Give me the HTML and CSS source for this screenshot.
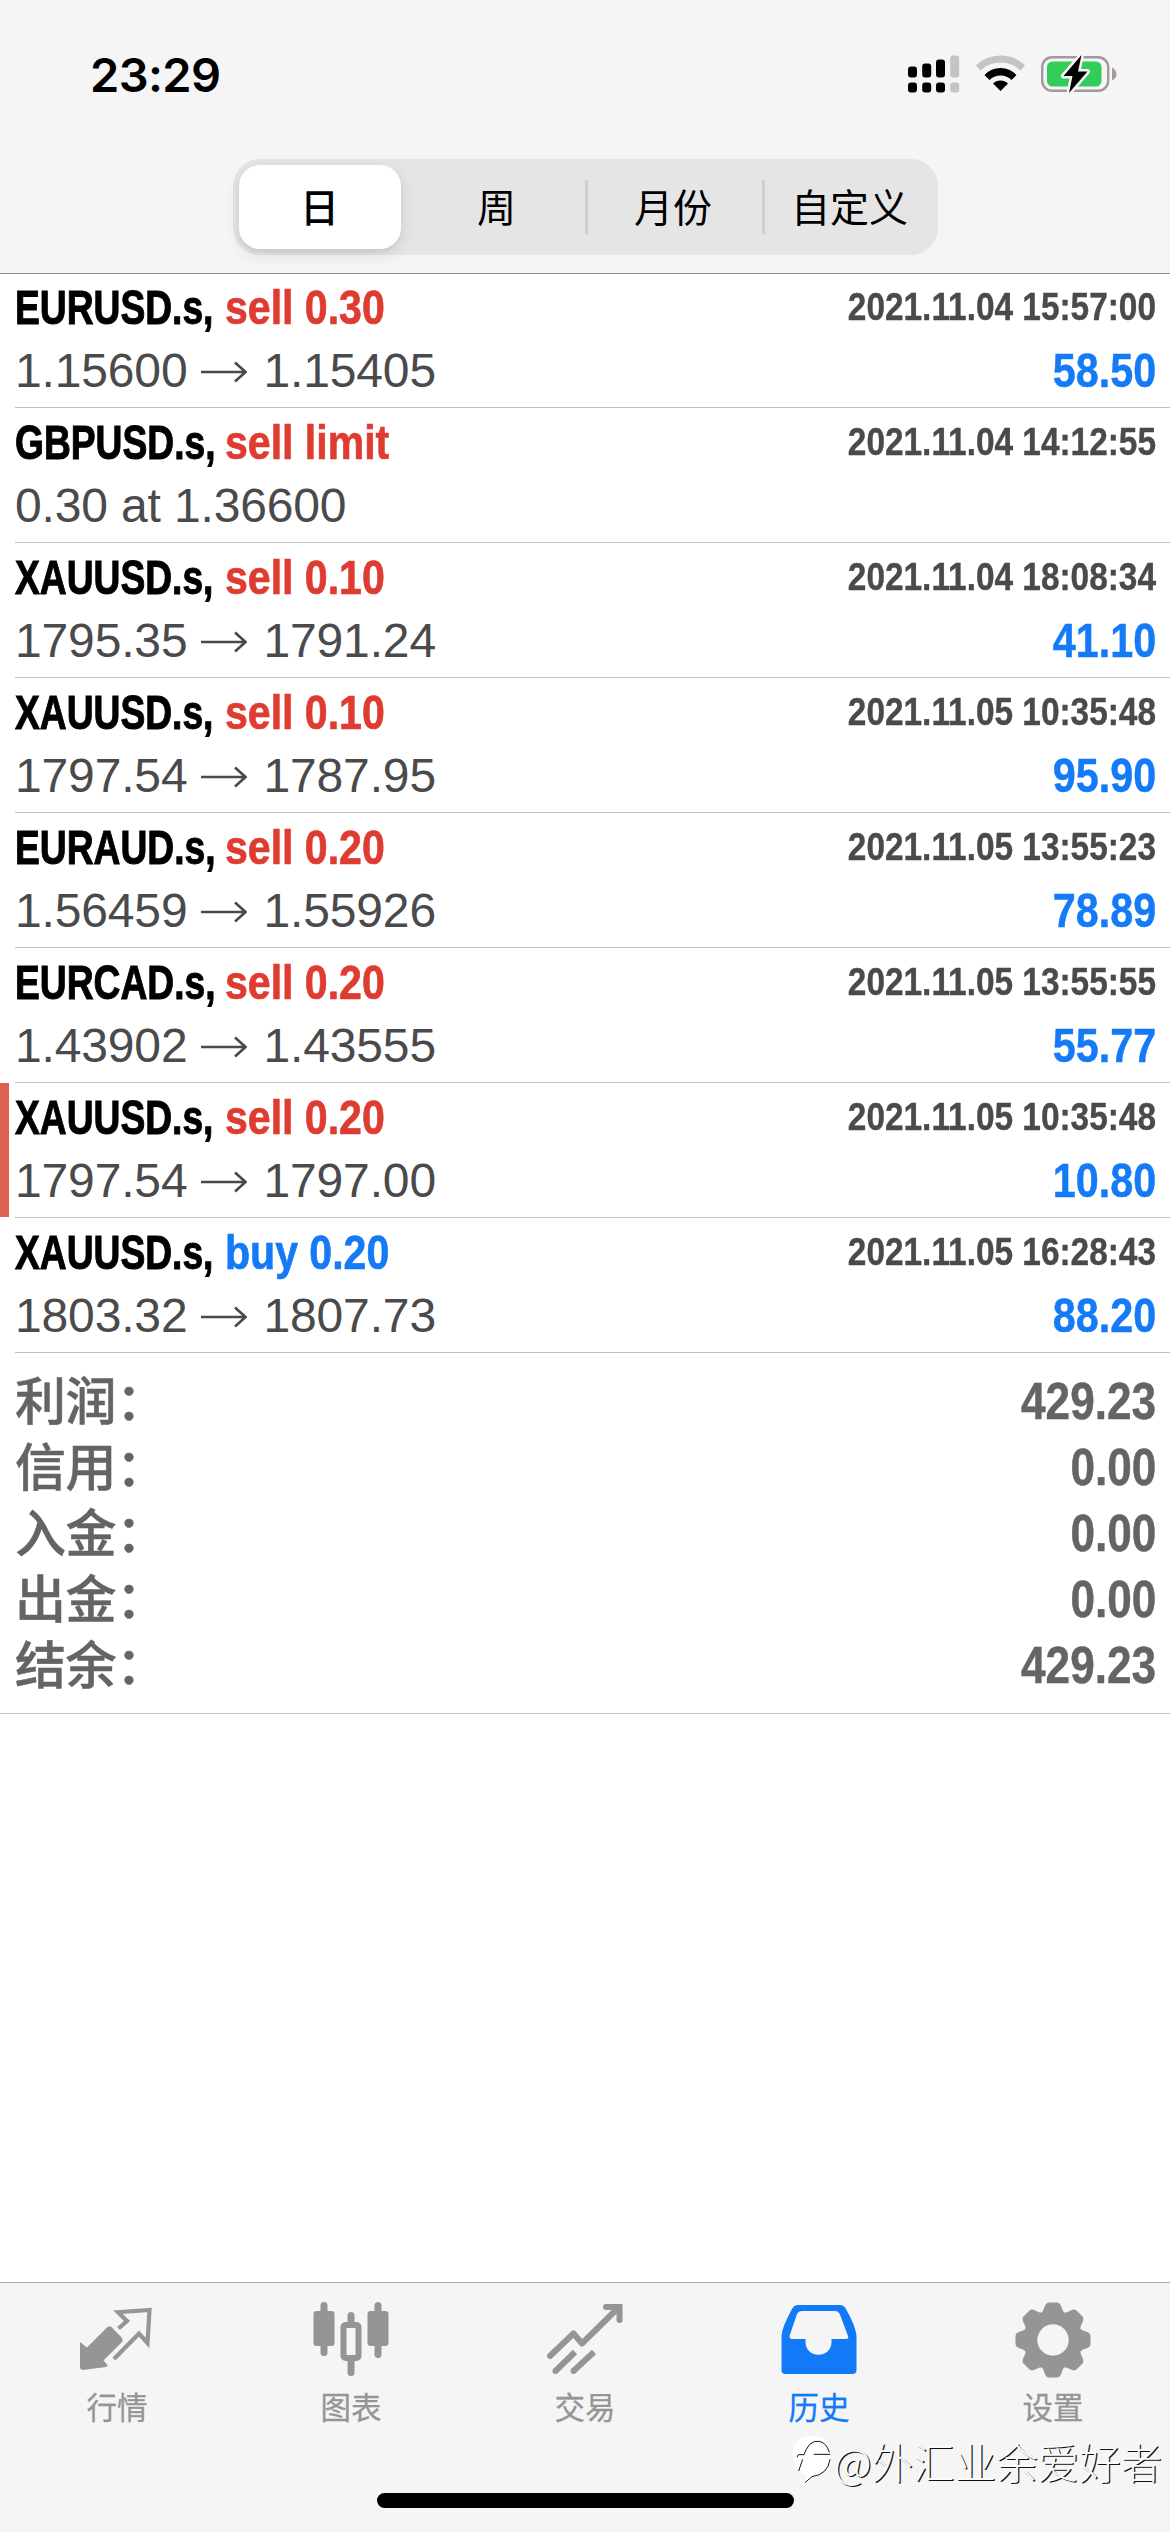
FILE: index.html
```
<!DOCTYPE html>
<html lang="zh-CN">
<head>
<meta charset="utf-8">
<title>历史</title>
<link rel="stylesheet" href="styles.css">
</head>
<body>
<svg class="defs" width="0" height="0" aria-hidden="true">
  <symbol id="arrow" viewBox="0 0 46 22"><path d="M0 11H44M34 1.500L44.500 11L34 20.500" fill="none" stroke="currentColor" stroke-width="2.600"/></symbol>
</svg>
<header class="header">
  <div class="status">
    <span class="clock">23:29</span>
    <svg class="signal" width="52" height="38" viewBox="0 0 52 38">
      <rect x="0" y="11.500" width="9" height="11" rx="3"/><rect x="14.200" y="8.500" width="9" height="14" rx="3"/><rect x="28" y="4.500" width="9" height="18" rx="3"/><rect class="faint" x="42.200" y="0.500" width="9" height="22" rx="3"/>
      <rect x="0" y="27.500" width="9" height="10" rx="3"/><rect x="14.200" y="27.500" width="9" height="10" rx="3"/><rect x="28" y="27.500" width="9" height="10" rx="3"/><rect class="faint" x="42.200" y="27.500" width="9" height="10" rx="3"/>
    </svg>
    <svg class="wifi" width="49" height="38" viewBox="0 0 49 38">
      <path class="faint" d="M0 10.500Q10 0.500 24.500 0.500T49 10.500L44.500 15.500Q36 7.500 24.500 7.500T4.500 15.500Z"/>
      <path d="M8.500 20Q15 13 24.500 13T40.500 20L35.500 25Q31 20.500 24.500 20.500T13.500 25Z"/>
      <path d="M17 28.500Q20 25.500 24.500 25.500T32 28.500L24.500 36Z"/>
    </svg>
    <svg class="battery" width="76" height="40" viewBox="0 0 76 40">
      <rect x="1.200" y="3.200" width="66" height="33.600" rx="10" fill="none" stroke="#a2999e" stroke-width="2.400"/>
      <path d="M71 13.500Q75.500 16 75.500 20T71 26.500Z" fill="#a2999e"/>
      <rect x="6" y="7.500" width="54.500" height="25" rx="5.500" fill="#32cd58"/>
      <path d="M40.500 1L22.500 22H31.500L28 39L46.500 17.500H37Z" fill="#000" stroke="#f5f5f5" stroke-width="5" stroke-linejoin="round" paint-order="stroke"/>
    </svg>
  </div>
  <nav class="segments">
    <span class="segment selected">日</span><span class="segment">周</span><span class="segment divided">月份</span><span class="segment divided">自定义</span>
  </nav>
</header>
<main>
  <ul class="deals">
    <li class="deal"><div class="line"><span class="name"><b class="symbol">EURUSD.s,</b><b class="side sell">sell 0.30</b></span><time class="date">2021.11.04 15:57:00</time></div><div class="line"><span class="price">1.15600<svg class="arrow"><use href="#arrow"/></svg>1.15405</span><b class="amount">58.50</b></div></li>
    <li class="deal"><div class="line"><span class="name"><b class="symbol">GBPUSD.s,</b><b class="side sell">sell limit</b></span><time class="date">2021.11.04 14:12:55</time></div><div class="line"><span class="price">0.30 at 1.36600</span></div></li>
    <li class="deal"><div class="line"><span class="name"><b class="symbol">XAUUSD.s,</b><b class="side sell">sell 0.10</b></span><time class="date">2021.11.04 18:08:34</time></div><div class="line"><span class="price">1795.35<svg class="arrow"><use href="#arrow"/></svg>1791.24</span><b class="amount">41.10</b></div></li>
    <li class="deal"><div class="line"><span class="name"><b class="symbol">XAUUSD.s,</b><b class="side sell">sell 0.10</b></span><time class="date">2021.11.05 10:35:48</time></div><div class="line"><span class="price">1797.54<svg class="arrow"><use href="#arrow"/></svg>1787.95</span><b class="amount">95.90</b></div></li>
    <li class="deal"><div class="line"><span class="name"><b class="symbol">EURAUD.s,</b><b class="side sell">sell 0.20</b></span><time class="date">2021.11.05 13:55:23</time></div><div class="line"><span class="price">1.56459<svg class="arrow"><use href="#arrow"/></svg>1.55926</span><b class="amount">78.89</b></div></li>
    <li class="deal"><div class="line"><span class="name"><b class="symbol">EURCAD.s,</b><b class="side sell">sell 0.20</b></span><time class="date">2021.11.05 13:55:55</time></div><div class="line"><span class="price">1.43902<svg class="arrow"><use href="#arrow"/></svg>1.43555</span><b class="amount">55.77</b></div></li>
    <li class="deal flagged"><div class="line"><span class="name"><b class="symbol">XAUUSD.s,</b><b class="side sell">sell 0.20</b></span><time class="date">2021.11.05 10:35:48</time></div><div class="line"><span class="price">1797.54<svg class="arrow"><use href="#arrow"/></svg>1797.00</span><b class="amount">10.80</b></div></li>
    <li class="deal"><div class="line"><span class="name"><b class="symbol">XAUUSD.s,</b><b class="side buy">buy 0.20</b></span><time class="date">2021.11.05 16:28:43</time></div><div class="line"><span class="price">1803.32<svg class="arrow"><use href="#arrow"/></svg>1807.73</span><b class="amount">88.20</b></div></li>
  </ul>
  <dl class="summary">
    <div class="total"><dt>利润：</dt><dd>429.23</dd></div>
    <div class="total"><dt>信用：</dt><dd>0.00</dd></div>
    <div class="total"><dt>入金：</dt><dd>0.00</dd></div>
    <div class="total"><dt>出金：</dt><dd>0.00</dd></div>
    <div class="total"><dt>结余：</dt><dd>429.23</dd></div>
  </dl>
</main>
<nav class="tabs">
  <a class="tab"><svg width="76" height="76" viewBox="0 0 76 76">
    <path d="M1 40L8 45.500L28 25.500Q30.500 23 33 25.500L43 36Q44.500 38 43 40L24.500 58.500L28.500 63Q29 64.500 27 65L4 68Q1 68 1 65Z" fill="currentColor"/>
    <path d="M39.500 26.500L48 19L39 10.200L70.500 8L68.500 41L60 31.500L35 57" fill="none" stroke="currentColor" stroke-width="4.200"/>
  </svg><span>行情</span></a>
  <a class="tab"><svg width="76" height="76" viewBox="0 0 76 76">
    <g fill="currentColor"><rect x="0.500" y="9" width="21" height="35" rx="3"/><rect x="7.500" y="0" width="7" height="54" rx="3.500"/><rect x="54.500" y="9" width="21" height="35" rx="3"/><rect x="61.500" y="0" width="7" height="56" rx="3.500"/><rect x="34.500" y="10" width="7" height="15" rx="3.500"/><rect x="34.500" y="54" width="7" height="20" rx="3.500"/></g>
    <rect x="30.500" y="23" width="15" height="33" rx="2" fill="none" stroke="currentColor" stroke-width="6"/>
  </svg><span>图表</span></a>
  <a class="tab"><svg width="76" height="76" viewBox="0 0 76 76">
    <path d="M3 54L26.500 31.500L35 41.500L71 6" fill="none" stroke="currentColor" stroke-width="6" stroke-linecap="round" stroke-linejoin="round"/>
    <path d="M59 5H72.500V18" fill="none" stroke="currentColor" stroke-width="6" stroke-linecap="round"/>
    <path d="M28 50L8.500 69M47 50L26.500 69" fill="none" stroke="currentColor" stroke-width="6"/><circle cx="8.500" cy="69" r="3" fill="currentColor"/><circle cx="26.500" cy="69" r="3" fill="currentColor"/>
  </svg><span>交易</span></a>
  <a class="tab active"><svg width="76" height="76" viewBox="0 0 76 76">
    <path d="M0.500 68V34Q1 25 11 7Q13 3 17 3H59Q63 3 65 7Q75 25 75.500 34V68Q75.500 72 71.500 72H4.500Q0.500 72 0.500 68ZM8.500 34Q8.500 37 11 37H24.500V40C24.500 57 50.500 57 50.500 40V37H65Q68 37 67 34L59.500 14Q58 9 54 9H21Q17.500 9 16 12Z" fill="currentColor" fill-rule="evenodd"/>
  </svg><span>历史</span></a>
  <a class="tab"><svg width="76" height="76" viewBox="0 0 76 76">
    <defs><g id="tooth"><path d="M21 14Q28 12 29.500 5Q31 0.500 34 0.500H42Q45 0.500 46.500 5Q48 12 55 14L38 38Z"/></g></defs>
    <mask id="hub"><rect width="76" height="76" fill="#fff"/><circle cx="38" cy="38" r="15.700" fill="#000"/></mask>
    <g fill="currentColor" mask="url(#hub)"><circle cx="38" cy="38" r="29.500"/><use href="#tooth"/><use href="#tooth" transform="rotate(45 38 38)"/><use href="#tooth" transform="rotate(90 38 38)"/><use href="#tooth" transform="rotate(135 38 38)"/><use href="#tooth" transform="rotate(180 38 38)"/><use href="#tooth" transform="rotate(225 38 38)"/><use href="#tooth" transform="rotate(270 38 38)"/><use href="#tooth" transform="rotate(315 38 38)"/></g>
  </svg><span>设置</span></a>
  <i class="home-bar"></i>
  <div class="watermark"><svg width="43" height="50" viewBox="27 45 129 150">
    <path d="M32 100A55 52 0 0 1 146 92Q150 140 112 162Q85 172 70 190Q68 178 72 162Q36 145 32 100Z" fill="#fff"/>
    <path d="M45 109L49 101H66Q72 84 83 70Q96 58 112 61Q134 66 142 94M95 100H145M62 115L50 150M144 115Q138 160 90 167L69 185" fill="none" stroke="#161616" stroke-width="3"/>
  </svg><span>@外汇业余爱好者</span></div>
</nav>
</body>
</html>
```
FILE: styles.css
```
* { box-sizing: border-box; margin: 0; padding: 0; }
body {
  width: 1170px; height: 2532px; overflow: hidden; background: #fff;
  display: flex; flex-direction: column;
  font-family: "Liberation Sans", "Noto Sans CJK SC", sans-serif; color: #000;
}
ul { list-style: none; }
svg { display: block; flex: none; }
.defs { position: absolute; }

.header { height: 274px; flex: none; background: #f5f5f5; border-bottom: 1px solid #8e8e90; display: flex; flex-direction: column; align-items: center; }
.status { width: 100%; height: 159px; padding: 55px 53px 0 90px; display: flex; align-items: flex-start; }
.clock { margin-right: auto; font: 600 47px/39px Inter, sans-serif; letter-spacing: -0.6px; }
.signal { margin-right: 16px; }
.wifi { margin-right: 16px; }
.battery { margin-top: -1px; }
.faint { fill: #c4c4c5; }
.segments { width: 705px; height: 96px; padding: 6px 0 6px 6px; border-radius: 27px; background: #e5e5e6; display: grid; grid-template-columns: 170px 176px 177px 1fr; }
.segment { display: flex; align-items: center; justify-content: center; padding-bottom: 4px; font: 400 39px/80px "Noto Sans CJK SC", sans-serif; }
.selected { width: 162px; background: #fff; border-radius: 21px; box-shadow: 0 6px 16px rgba(0,0,0,.1), 0 2px 4px rgba(0,0,0,.05); font-weight: 500; }
.divided { background: linear-gradient(#cfcfd1, #cfcfd1) left center / 3px 54px no-repeat; }

.deals { margin-top: -1px; }
.deal { position: relative; height: 135px; margin-left: 15px; padding: 3px 14px 0 0; border-bottom: 1px solid #c0c0c2; }
.deal:first-child { border-top: 1px solid #8e8e90; padding-top: 2px; }
.flagged::before { content: ""; position: absolute; left: -15px; top: 0; width: 9px; height: 134px; background: #df604f; }
.line { height: 63px; display: flex; justify-content: space-between; font-size: 48px; line-height: 63px; white-space: nowrap; }
.name { display: grid; grid-template-columns: 209.5px auto; }
.symbol, .side { width: max-content; transform-origin: left; }
.symbol { transform: scaleX(.775); -webkit-text-stroke: 1px currentColor; }
.side { transform: scaleX(.855); -webkit-text-stroke: .7px currentColor; }
.sell { color: #df3c31; }
.buy { color: #147af5; }
.date { font-size: 39px; font-weight: 700; line-height: 62px; color: #4a4a4d; transform: scaleX(.856); transform-origin: right; -webkit-text-stroke: .4px currentColor; }
.price { color: #4a4a4d; display: flex; align-items: center; white-space: pre; letter-spacing: -.15px; }
.arrow { width: 46px; height: 22px; margin: 2px 16px 0 14px; }
.amount { color: #147af5; transform: scaleX(.86); transform-origin: right; -webkit-text-stroke: .5px currentColor; }

.summary { padding: 15px 14px 15px 15px; height: 361px; border-bottom: 1px solid #c0c0c2; color: #646464; }
.total { height: 66px; display: flex; justify-content: space-between; font-size: 51px; line-height: 67px; font-weight: 700; }
.total dt { font: 500 51px/60px "Noto Sans CJK SC", sans-serif; letter-spacing: -.4px; -webkit-text-stroke: .5px currentColor; }
.total dd { transform: scaleX(.865); transform-origin: right; -webkit-text-stroke: .5px currentColor; }

.tabs { position: relative; margin-top: auto; height: 250px; flex: none; padding-top: 19px; background: #f5f5f5; border-top: 1px solid #aaaaac; display: grid; grid-template-columns: repeat(5, 1fr); color: #959595; }
.tab { display: flex; flex-direction: column; align-items: center; font: 400 30.500px/44px "Noto Sans CJK SC", sans-serif; }
.tab svg { margin-bottom: 6px; }
.tab span { -webkit-text-stroke: .3px currentColor; }
.active { color: #127af6; }
.home-bar { position: absolute; left: 377px; top: 210px; width: 417px; height: 15px; border-radius: 8px; background: #000; }
.watermark { position: absolute; right: 8px; top: 153px; display: flex; align-items: center; white-space: nowrap; font: 300 41.500px/50px "Noto Sans CJK SC", sans-serif; color: #fafafa; text-shadow: 1.200px 1.200px 0 #111; }
```
